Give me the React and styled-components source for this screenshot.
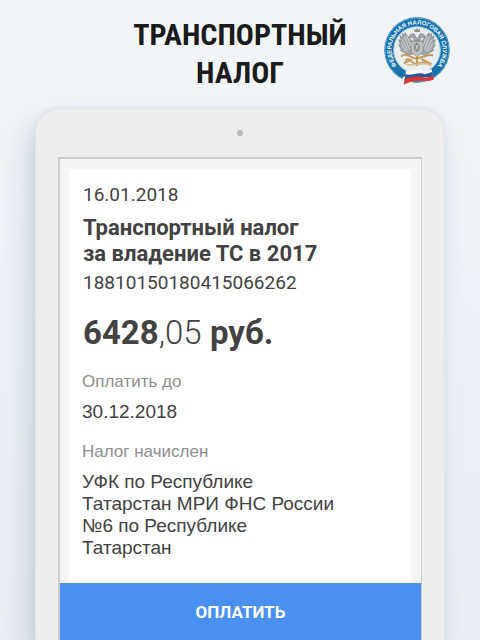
import React from "react";
import styled, { createGlobalStyle } from "styled-components";

const roboto = 'Roboto, "Noto Sans", sans-serif';
const grotesk = '"Liberation Sans", Arial, sans-serif';

const GlobalStyle = createGlobalStyle`
  *, *::before, *::after { box-sizing: border-box; }
  body { margin: 0; font-family: ${roboto}; color: #424242; }
`;

const Page = styled.main`
  min-height: 100vh;
  display: flex;
  flex-direction: column;
  background: linear-gradient(#f2f6f9, #eff3f8 40%, #e8ecf5);
`;

const Header = styled.header`
  display: grid;
  grid-template-columns: 1fr auto 1fr;
  align-items: center;
  padding: 16px 29px 16px;
`;

const Heading = styled.h1`
  grid-column: 2;
  margin: 0;
  font: 700 30px/38px "Roboto Condensed", "Liberation Sans Narrow", "Arial Narrow", sans-serif;
  text-align: center;
  color: #1b1b1b;
`;

const Seal = styled.svg`
  justify-self: end;
  align-self: start;
  width: 68px;
  height: 70px;
`;

const Tablet = styled.section`
  flex: 1;
  display: flex;
  flex-direction: column;
  margin: 0 35px;
  padding: 0 21px;
  border: 2px solid #e8e8e9;
  border-top-color: #e5e8ea;
  border-bottom: 0;
  border-radius: 24px 24px 0 0;
  background: #eeeeee;
  box-shadow: -8px 14px 26px #9ca7b466, 0 0 5px #ccd4db88;
`;

const Camera = styled.div`
  width: 6px;
  height: 6px;
  margin: 20px auto 21px;
  border-radius: 50%;
  background: #b9b9b9;
`;

const Screen = styled.div`
  flex: 1;
  display: flex;
  flex-direction: column;
  border: 2px solid #cbcbcc;
  border-width: 2px 1px 0 2px;
  background: #f4f4f4;
`;

const Card = styled.article`
  flex: 1;
  margin: 10px 10px 0 9px;
  padding: 14px 14px 24px 13px;
  background: #ffffff;
`;

const Summary = styled.div`
  padding-left: 1px;
`;

const Issued = styled.time`
  display: block;
  font-size: 19px;
  line-height: 24px;
`;

const Subject = styled.h2`
  margin: 8px 0 4px;
  font-size: 22px;
  line-height: 26px;
  font-weight: 700;
`;

const Account = styled.p`
  margin: 0;
  font-size: 19px;
  line-height: 24px;
`;

const Amount = styled.p`
  margin: 18px 0;
  font-size: 33px;
  line-height: 40px;
  font-weight: 700;
`;

const Cents = styled.span`
  font-weight: 300;
`;

const Details = styled.dl`
  margin: 0;
  font-family: ${grotesk};
`;

const Term = styled.dt`
  font-size: 17px;
  line-height: 22px;
  color: #8e8e8e;
`;

const Value = styled.dd`
  margin: 8px 0 18px;
  font-size: 19px;
  line-height: 22px;
  &:last-child { margin-bottom: 0; }
`;

const PayButton = styled.button`
  flex: none;
  height: 57px;
  padding: 0;
  border: 0;
  background: #4a90f0;
  color: #ffffff;
  font: 700 17px/22px ${roboto};
  cursor: pointer;
`;

function TaxServiceSeal() {
  return (
    <Seal viewBox="24 36 204 210" role="img" aria-label="Федеральная налоговая служба">
      <circle cx="126" cy="138" r="98" fill="#1772ac" />
      <circle cx="126" cy="138" r="96" fill="none" stroke="#5ea3cb" strokeWidth="3" />
      <circle cx="126" cy="138" r="70" fill="#e9eff0" stroke="#9ec7dc" strokeWidth="3" />
      <path id="seal-arc" d="M72 193 A77 77 0 1 1 180 193" fill="none" />
      <text fill="#f2fbff" fontFamily="Liberation Sans, sans-serif" fontWeight="700" fontSize="18">
        <textPath href="#seal-arc" startOffset="50%" textAnchor="middle">ФЕДЕРАЛЬНАЯ НАЛОГОВАЯ СЛУЖБА</textPath>
      </text>
      <g fill="#a3a7a8" stroke="#777e82" strokeWidth="2" strokeLinejoin="round">
        <path d="M119 113 C105 110 101 96 89 86 L91 96 L82 88 L84 101 L75 95 L79 111 L71 107 L77 124 L71 122 L80 138 L76 139 L91 148 L103 153 L115 149Z" />
        <path d="M133 113 C147 110 151 96 163 86 L161 96 L170 88 L168 101 L177 95 L173 111 L181 107 L175 124 L181 122 L172 138 L176 139 L161 148 L149 153 L137 149Z" />
        <path d="M119 111 L113 99 L101 101 L107 91 L117 89 L123 99 L126 111 L130 99 L136 89 L146 91 L152 101 L140 99 L133 111Z" />
        <path d="M108 112 H144 V145 L126 158 L108 145Z" fill="#c1c2bf" />
      </g>
      <g fill="none" stroke="#e7eaeb" strokeWidth="2">
        <path d="M88 97 L103 136 M81 106 L98 140 M79 120 L93 142 M95 94 L109 127" />
        <path d="M164 97 L149 136 M171 106 L154 140 M173 120 L159 142 M157 94 L143 127" />
      </g>
      <path d="M118 84 V74 L123 78 L126 71 L130 78 L135 74 V84Z" fill="#8f8d86" />
      <path d="M118 120 L126 115 L134 122 V137 L126 145 L117 137Z" fill="#868b8e" />
      <path d="M122 122 L130 137 M131 121 L121 138" stroke="#dfe3e3" strokeWidth="2" />
      <g fill="none" stroke="#c69b5a" strokeWidth="6">
        <path d="M78 157 C98 143 109 166 126 163 S157 150 174 154" />
        <path d="M91 170 C103 155 111 183 126 180 S153 169 165 178" />
        <path d="M86 178 L111 166 M139 165 L170 181 M126 156 V186" />
      </g>
      <path d="M92 180 C111 190 141 172 162 181 L167 187" fill="none" stroke="#d9bd8e" strokeWidth="5" />
      <path d="M92 197 C108 209 131 192 149 201 L170 195 L173 216 C159 237 132 211 87 241 L82 221 L92 215Z" fill="#f8f8f7" />
      <path d="M92 211 C112 217 132 201 150 211 L171 204 L174 217 C155 228 132 210 88 228Z" fill="#23579d" />
      <path d="M89 225 C109 218 133 213 151 222 L174 216 L177 226 C155 240 132 218 86 242Z" fill="#df3434" />
    </Seal>
  );
}

export default function App() {
  return (
    <>
      <GlobalStyle />
      <Page>
        <Header>
          <Heading>ТРАНСПОРТНЫЙ<br />НАЛОГ</Heading>
          <TaxServiceSeal />
        </Header>
        <Tablet>
          <Camera />
          <Screen>
            <Card>
              <Summary>
                <Issued dateTime="2018-01-16">16.01.2018</Issued>
                <Subject>Транспортный налог<br />за владение ТС в 2017</Subject>
                <Account>18810150180415066262</Account>
                <Amount>6428<Cents>,05</Cents> руб.</Amount>
              </Summary>
              <Details>
                <Term>Оплатить до</Term>
                <Value>30.12.2018</Value>
                <Term>Налог начислен</Term>
                <Value>
                  УФК по Республике<br />
                  Татарстан МРИ ФНС России<br />
                  №6 по Республике<br />
                  Татарстан
                </Value>
              </Details>
            </Card>
            <PayButton type="button">ОПЛАТИТЬ</PayButton>
          </Screen>
        </Tablet>
      </Page>
    </>
  );
}
